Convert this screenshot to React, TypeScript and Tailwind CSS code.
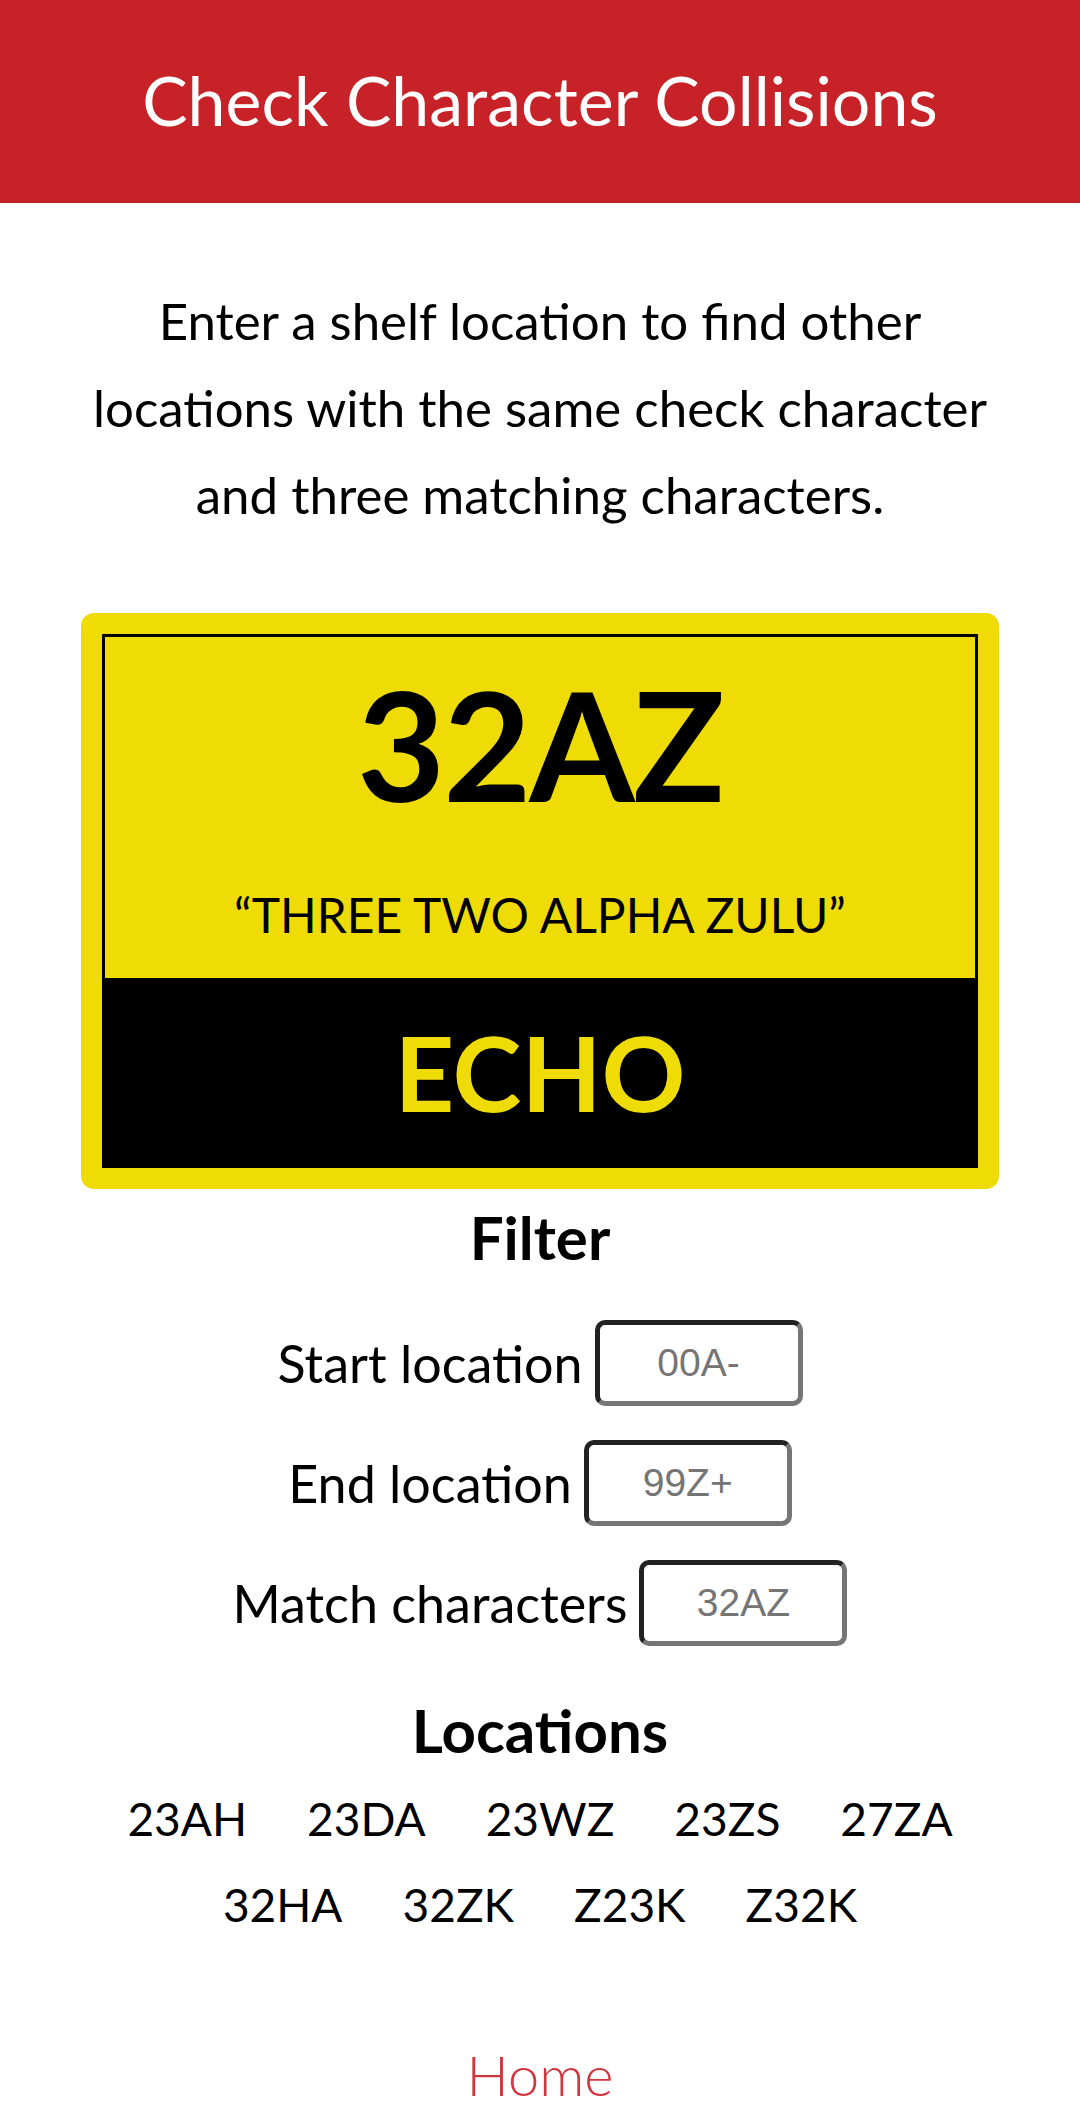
const rows = [
  ["23AH", "23DA", "23WZ", "23ZS", "27ZA"],
  ["32HA", "32ZK", "Z23K", "Z32K"],
];

const fields = [
  { label: "Start location", placeholder: "00A-" },
  { label: "End location", placeholder: "99Z+" },
  { label: "Match characters", placeholder: "32AZ" },
];

export default function App() {
  return (
    <div className="min-h-screen bg-white font-['Lato',sans-serif] text-black">
      {/* Header */}
      <header className="flex h-[203px] items-center justify-center bg-[#c62228]">
        <h1 className="-mt-[4px] text-[68px] font-normal leading-none text-white">
          Check Character Collisions
        </h1>
      </header>

      <main className="flex flex-col items-center">
        <p className="mt-[74px] text-center text-[51px] leading-[87px]">
          Enter a shelf location to find other
          <br />
          locations with the same check character
          <br />
          and three matching characters.
        </p>

        {/* Sign card */}
        <div className="mt-[75px] w-[918px] rounded-[13px] bg-[#efdc07] p-[21px]">
          <div className="border-[3px] border-black">
            <div className="flex h-[341px] flex-col items-center">
              <div className="mt-[30px] text-[152px] font-bold leading-none tracking-[-2px]">
                32AZ
              </div>
              <div className="mt-[72px] text-[48px] leading-none">
                “THREE TWO ALPHA ZULU”
              </div>
            </div>
            <div className="flex h-[187px] items-center justify-center bg-black">
              <span className="text-[104px] font-bold leading-none text-[#efdc07]">
                ECHO
              </span>
            </div>
          </div>
        </div>

        {/* Filter */}
        <h2 className="mt-[10px] text-[60px] font-bold leading-[76px]">Filter</h2>
        <div className="mt-[45px] flex flex-col items-center gap-[34px]">
          {fields.map((f) => (
            <label key={f.label} className="flex items-center gap-[12px]">
              <span className="text-[52px] leading-none">{f.label}</span>
              <input
                type="text"
                placeholder={f.placeholder}
                className="h-[86px] w-[208px] rounded-[10px] border-[5px] border-t-[#222222] border-l-[#222222] border-r-[#767676] border-b-[#767676] bg-white text-center font-['Liberation_Sans',Arial,sans-serif] text-[39px] outline-none placeholder:text-[#757575]"
              />
            </label>
          ))}
        </div>

        {/* Locations */}
        <h2 className="mt-[46px] text-[60px] font-bold leading-[76px]">Locations</h2>
        <div className="mt-[8px] flex flex-col items-center">
          {rows.map((row, i) => (
            <div key={i} className="flex gap-[60px] text-[46px] leading-[86px]">
              {row.map((loc) => (
                <span key={loc}>{loc}</span>
              ))}
            </div>
          ))}
        </div>

        <a href="#" className="mt-[87px] mb-[20px] text-[56px] font-light leading-[80px] text-[#d0363f]">
          Home
        </a>
      </main>
    </div>
  );
}
